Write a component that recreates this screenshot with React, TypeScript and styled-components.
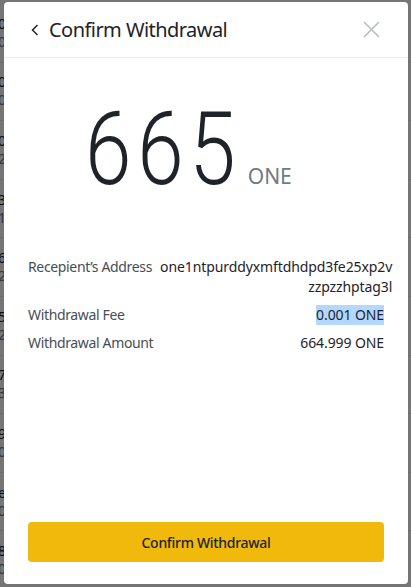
import React from 'react'
import styled, { createGlobalStyle } from 'styled-components'

const GlobalStyle = createGlobalStyle`
  html, body {
    margin: 0;
    padding: 0;
    height: 100%;
    background: #ffffff;
    font-family: 'Noto Sans', 'Open Sans', sans-serif;
  }
  #root {
    height: 100%;
  }
`

// Page behind the modal
const Page = styled.div`
  position: relative;
  width: 411px;
  height: 587px;
  overflow: hidden;
  background: #ffffff;
`

const List = styled.div`
  display: flex;
  flex-direction: column;
  padding-top: 4px;
  margin-left: -2px;
`

const ListRow = styled.div`
  height: 58.6px;
  box-sizing: border-box;
  border-bottom: 1px solid #eaecef;
  display: flex;
  flex-direction: column;
  justify-content: center;
  gap: 2px;
  font-size: 14px;
  line-height: 16px;
`

const ListTop = styled.span`
  color: #1e2329;
`

const ListBottom = styled.span`
  color: #707a8a;
`

const Overlay = styled.div`
  position: absolute;
  inset: 0;
  background: rgba(0, 0, 0, 0.54);
`

// Modal
const Modal = styled.div`
  position: absolute;
  top: 2px;
  left: 4px;
  right: 3px;
  bottom: 3px;
  background: #ffffff;
  border-radius: 4px;
  display: flex;
  flex-direction: column;
`

const Header = styled.div`
  height: 56px;
  box-sizing: border-box;
  border-bottom: 1px solid #eaecef;
  display: flex;
  align-items: center;
  padding: 0 28px 0 27px;
`

const BackButton = styled.button`
  border: 0;
  background: none;
  padding: 0;
  width: 12px;
  height: 20px;
  display: flex;
  align-items: center;
  cursor: pointer;
`

const Title = styled.h2`
  margin: 0 0 0 6px;
  flex: 1;
  font-size: 20px;
  font-weight: 400;
  letter-spacing: -0.55px;
  color: #1e2329;
  line-height: 28px;
`

const CloseButton = styled.button`
  border: 0;
  background: none;
  padding: 0;
  width: 18px;
  height: 18px;
  display: flex;
  align-items: center;
  justify-content: center;
  cursor: pointer;
`

const Body = styled.div`
  flex: 1;
  display: flex;
  flex-direction: column;
  padding: 0 24px 22px;
`

const AmountBox = styled.div`
  display: flex;
  align-items: baseline;
  height: 150px;
  padding: 26px 0 0 57px;
  box-sizing: border-box;
`

const AmountValue = styled.span`
  display: inline-block;
  font-family: Roboto, sans-serif;
  font-size: 102px;
  font-weight: 300;
  color: #1e2329;
  line-height: 130px;
  letter-spacing: 7px;
  transform: scaleX(0.82);
  transform-origin: left center;
  margin-right: -36px;
`

const AmountUnit = styled.span`
  font-family: 'Noto Sans', sans-serif;
  font-size: 21px;
  color: #707a8a;
  margin-left: 8px;
`

const Details = styled.div`
  display: flex;
  flex-direction: column;
  gap: 8px;
  margin-top: 49px;
`

const Row = styled.div`
  display: flex;
  justify-content: space-between;
  gap: 8px;
  font-size: 14px;
  line-height: 20px;
`

const Label = styled.span`
  color: #474d57;
  white-space: nowrap;
  letter-spacing: -0.35px;
`

const Value = styled.span<{ $selected?: boolean }>`
  color: #1e2329;
  text-align: right;
  letter-spacing: -0.1px;
  background: ${(p) => (p.$selected ? '#b3d7fe' : 'transparent')};
`

const Spacer = styled.div`
  flex: 1;
`

const ConfirmButton = styled.button`
  height: 40px;
  border: 0;
  border-radius: 4px;
  background: #f0b90b;
  color: #1e2329;
  font-family: 'Noto Sans', sans-serif;
  font-size: 14px;
  font-weight: 500;
  letter-spacing: -0.3px;
  cursor: pointer;
`

const behind = [
  ['0', '0'],
  ['0', '0'],
  ['0', '2'],
  ['3', '1'],
  ['6', '2'],
  ['5', '2'],
  ['7', '3'],
  ['9', '0'],
  ['e', '0'],
  ['8', '0'],
]

const App = () => {
  return (
    <Page>
      <GlobalStyle />
      <List>
        {behind.map(([top, bottom], i) => (
          <ListRow key={i}>
            <ListTop>{top}</ListTop>
            <ListBottom>{bottom}</ListBottom>
          </ListRow>
        ))}
      </List>
      <Overlay />
      <Modal>
        <Header>
          <BackButton aria-label='Back'>
            <svg width='8' height='12' viewBox='0 0 8 12' fill='none'>
              <path d='M6.5 1L1.5 6l5 5' stroke='#1e2329' strokeWidth='1.5' />
            </svg>
          </BackButton>
          <Title>Confirm Withdrawal</Title>
          <CloseButton aria-label='Close'>
            <svg width='17' height='17' viewBox='0 0 17 17' fill='none'>
              <path d='M1 1l15 15M16 1L1 16' stroke='#b7bdc6' strokeWidth='1.6' />
            </svg>
          </CloseButton>
        </Header>
        <Body>
          <AmountBox>
            <AmountValue>665</AmountValue>
            <AmountUnit>ONE</AmountUnit>
          </AmountBox>
          <Details>
            <Row>
              <Label>Recepient’s Address</Label>
              <Value>
                one1ntpurddyxmftdhdpd3fe25xp2v
                <br />
                zzpzzhptag3l
              </Value>
            </Row>
            <Row>
              <Label>Withdrawal Fee</Label>
              <Value $selected>0.001 ONE</Value>
            </Row>
            <Row>
              <Label>Withdrawal Amount</Label>
              <Value>664.999 ONE</Value>
            </Row>
          </Details>
          <Spacer />
          <ConfirmButton>Confirm Withdrawal</ConfirmButton>
        </Body>
      </Modal>
    </Page>
  )
}

export default App
